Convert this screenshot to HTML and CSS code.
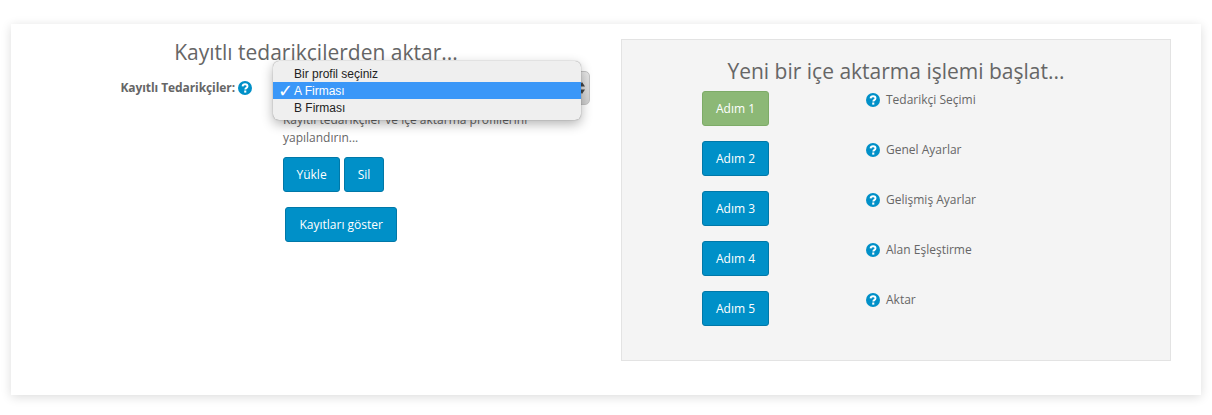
FILE: index.html
```html
<!DOCTYPE html>
<html lang="en">
<head>
    <meta charset="UTF-8">
    <title>İçe aktarma</title>
    <link rel="stylesheet" href="styles.css">
</head>
<body>
    <svg class="defs" width="0" height="0">
        <symbol id="help" viewBox="0 0 14 14">
            <circle cx="7" cy="7" r="7" fill="#0090c8"/>
            <path d="M4.6 5.4C4.7 4 5.7 3.2 7.1 3.2 8.5 3.2 9.5 4 9.5 5.2 9.5 6.1 9 6.6 8.2 7.1 7.6 7.5 7.3 7.8 7.3 8.5" fill="none" stroke="#fff" stroke-width="1.9"/>
            <rect x="6.2" y="9.5" width="2.1" height="2.1" fill="#fff"/>
        </symbol>
    </svg>
    <div class="card">
        <div class="saved">
            <h2>Kayıtlı tedarikçilerden aktar...</h2>
            <div class="form-row">
                <div class="form-label">
                    <b>Kayıtlı Tedarikçiler:</b>
                    <svg class="help"><use href="#help"/></svg>
                </div>
                <div class="controls">
                    <div class="select">
                        <svg class="stepper" viewBox="0 0 6 12">
                            <path d="M3 0L6 4.5H0zM3 12L0 7.5H6z" fill="#444"/>
                        </svg>
                    </div>
                    <p class="note">Kayıtlı tedarikçiler ve içe aktarma profillerini yapılandırın...</p>
                    <div class="btn-row">
                        <button class="btn">Yükle</button>
                        <button class="btn">Sil</button>
                    </div>
                    <button class="btn btn-show">Kayıtları göster</button>
                </div>
                <ul class="menu">
                    <li>Bir profil seçiniz</li>
                    <li class="selected"><span class="check">✓</span>A Firması</li>
                    <li>B Firması</li>
                </ul>
            </div>
        </div>
        <div class="panel">
            <h2>Yeni bir içe aktarma işlemi başlat...</h2>
            <div class="steps">
                <button class="btn btn-done">Adım 1</button>
                <div class="step-name"><svg class="help"><use href="#help"/></svg>Tedarikçi Seçimi</div>
                <button class="btn">Adım 2</button>
                <div class="step-name"><svg class="help"><use href="#help"/></svg>Genel Ayarlar</div>
                <button class="btn">Adım 3</button>
                <div class="step-name"><svg class="help"><use href="#help"/></svg>Gelişmiş Ayarlar</div>
                <button class="btn">Adım 4</button>
                <div class="step-name"><svg class="help"><use href="#help"/></svg>Alan Eşleştirme</div>
                <button class="btn">Adım 5</button>
                <div class="step-name"><svg class="help"><use href="#help"/></svg>Aktar</div>
            </div>
        </div>
    </div>
</body>
</html>
```

FILE: styles.css
```css
body {
    margin: 0;
    min-height: 100vh;
    background: #fff;
    color: #666;
    font-family: 'Open Sans', sans-serif;
    font-size: 12px;
    line-height: 18px;
}
.defs {
    position: absolute;
}
.card {
    display: flex;
    gap: 10px;
    box-sizing: border-box;
    width: 1190px;
    height: 371px;
    margin-left: 11px;
    padding: 15px 30px 0 10px;
    position: relative;
    top: 24px;
    background: #fff;
    box-shadow: 0 2px 10px rgba(0, 0, 0, 0.14);
}
h2 {
    margin: 0;
    font-size: 21px;
    font-weight: 400;
    line-height: 26px;
    text-align: center;
    color: #666;
}
.saved {
    width: 590px;
}
.saved h2 {
    margin-bottom: 6px;
}
.form-row {
    position: relative;
    display: flex;
    gap: 31px;
}
.form-label {
    display: flex;
    justify-content: flex-end;
    align-items: center;
    gap: 3px;
    width: 231px;
    height: 34px;
    color: #666;
}
.form-label b {
    font-weight: 700;
    letter-spacing: -0.08px;
}
.help {
    flex: none;
    width: 14px;
    height: 14px;
}
.controls {
    width: 307px;
}
.select {
    position: relative;
    box-sizing: border-box;
    height: 34px;
    border: 1px solid #c4c4c4;
    border-radius: 5px;
    background: linear-gradient(#e6e6e6, #cfcfcf);
}
.stepper {
    position: absolute;
    top: 10px;
    right: 4px;
    width: 6px;
    height: 12px;
}
.note {
    width: 270px;
    margin: 6px 0 10px;
}
.btn-row {
    display: flex;
    gap: 4px;
    margin-bottom: 15px;
}
.btn {
    box-sizing: border-box;
    height: 35px;
    padding: 0 12.5px;
    border: 1px solid #0078a8;
    border-radius: 3px;
    background: #0090c8;
    color: #fff;
    font-family: 'Open Sans', sans-serif;
    font-size: 12px;
    font-weight: 400;
}
.btn-show {
    margin-left: 2px;
    padding: 0 13.5px;
}
.menu {
    position: absolute;
    top: -10px;
    left: 252px;
    width: 308px;
    box-sizing: border-box;
    margin: 0;
    padding: 4px 0;
    list-style: none;
    background: #efefef;
    border-radius: 6px;
    box-shadow: 0 0 1px rgba(0, 0, 0, 0.5), 0 4px 12px rgba(0, 0, 0, 0.3);
    color: #222;
    font-family: 'Liberation Sans', sans-serif;
    font-size: 12px;
    line-height: 19px;
}
.menu li {
    position: relative;
    height: 17px;
    padding-left: 21px;
}
.menu .selected {
    background: #3a97f8;
    color: #fff;
}
.check {
    position: absolute;
    left: 5px;
    font-family: 'DejaVu Sans', sans-serif;
    font-size: 18px;
    line-height: 17px;
    font-weight: 700;
}
.panel {
    box-sizing: border-box;
    width: 550px;
    height: 322px;
    padding: 18px 0 0 80px;
    border: 1px solid #e3e3e3;
    background: #f4f4f4;
}
.panel h2 {
    margin: 0 0 7px -80px;
}
.steps {
    display: grid;
    grid-template-columns: 67px 1fr;
    column-gap: 97px;
    row-gap: 15px;
}
.steps .btn {
    padding: 0;
}
.steps .btn-done {
    background: #8cb876;
    border-color: #7dab67;
}
.step-name {
    display: flex;
    align-items: flex-start;
    gap: 6px;
}
.step-name .help {
    margin-top: 2px;
}
```
